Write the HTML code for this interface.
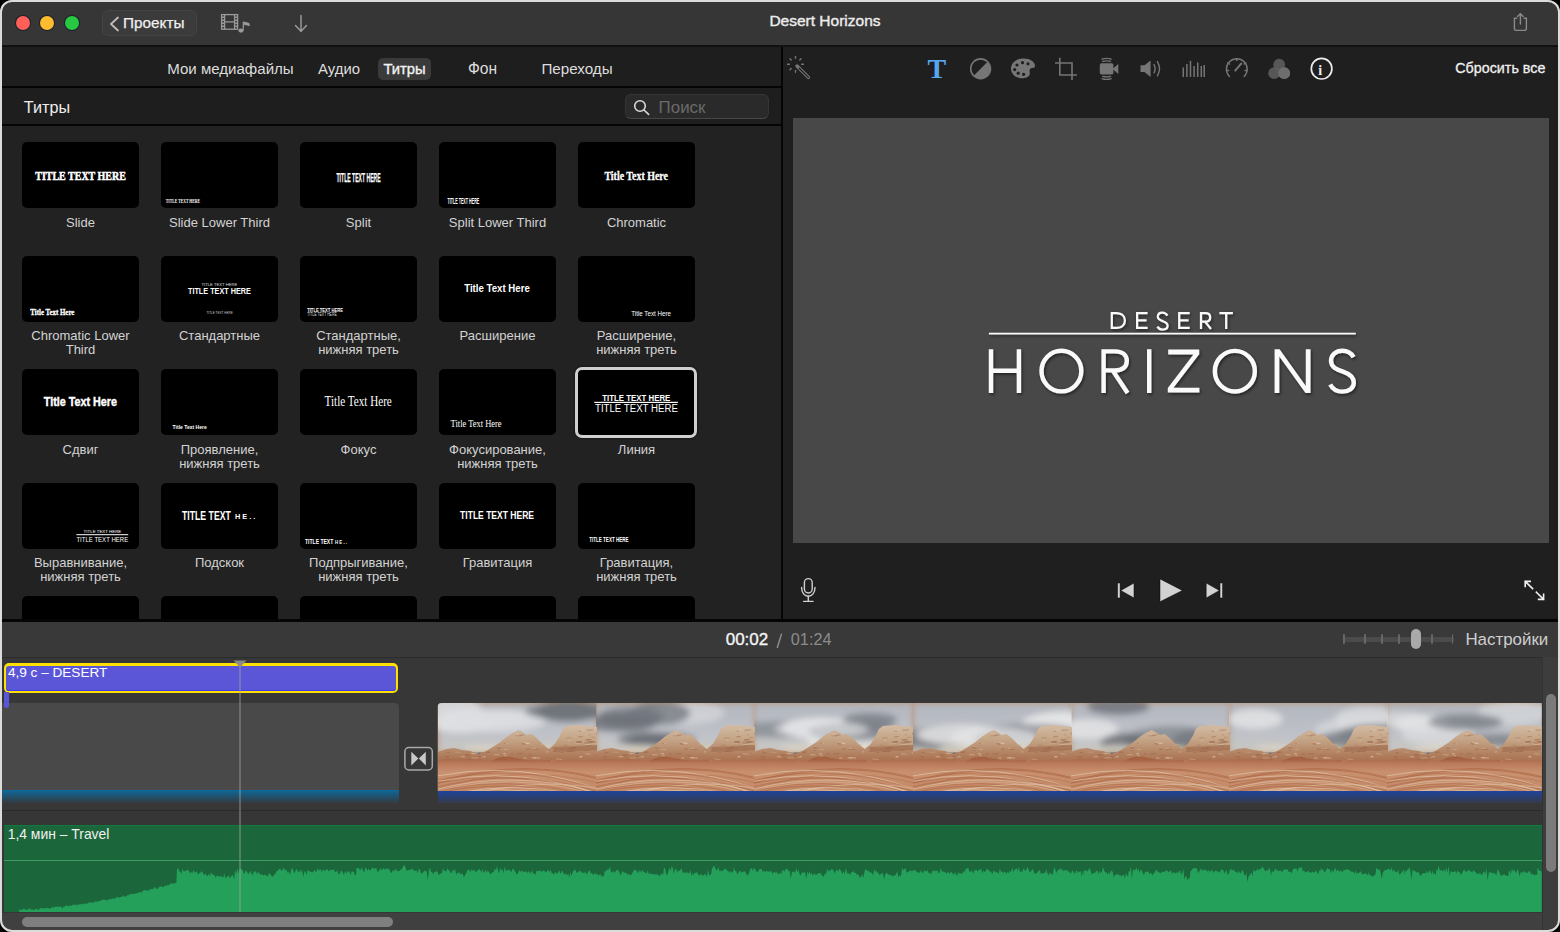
<!DOCTYPE html>
<html><head><meta charset="utf-8">
<style>
*{margin:0;padding:0;box-sizing:border-box}
html,body{width:1560px;height:932px;overflow:hidden;background:#000}
body{font-family:"Liberation Sans",sans-serif;position:relative}
#win{position:absolute;left:0;top:0;width:1560px;height:932px;border-radius:12px;overflow:hidden;background:#1f1f1f}
.t{position:absolute;line-height:1;white-space:nowrap}
.r{position:absolute}
svg{position:absolute;overflow:visible}
#frame{position:absolute;left:0;top:0;width:1560px;height:932px;border-radius:12px;border:2px solid #dcdcdc;pointer-events:none}
</style></head><body>
<div id="win">

<div class="r" style="left:0px;top:0px;width:1560px;height:46px;background:#363636;"></div>
<div class="r" style="left:0px;top:45.4px;width:1560px;height:1.9px;background:#111111;"></div>
<div class="r" style="left:16.2px;top:16.2px;width:14px;height:14px;border-radius:50%;background:#fe5f57;box-shadow:0 0 0 1px #1c2130"></div>
<div class="r" style="left:40.4px;top:16.2px;width:14px;height:14px;border-radius:50%;background:#febc2e;box-shadow:0 0 0 1px #1c2130"></div>
<div class="r" style="left:64.6px;top:16.2px;width:14px;height:14px;border-radius:50%;background:#28c840;box-shadow:0 0 0 1px #1c2130"></div>
<div class="r" style="left:102px;top:10px;width:95px;height:26px;border-radius:6px;background:#3b3b3b;border:1px solid #444"></div>
<svg style="left:0;top:0" width="1560" height="46"><polyline points="118,17.5 111,24 118,30.5" fill="none" stroke="#bdbdbd" stroke-width="1.8" stroke-linecap="round" stroke-linejoin="round"/></svg>
<svg style="left:0;top:0" width="1" height="1"><text x="123.00" y="28.20" font-family="'Liberation Sans'" font-size="15.3" font-weight="normal" fill="#f0f0f0" stroke="#f0f0f0" stroke-width="0.25">Проекты</text></svg>
<svg style="left:0;top:0" width="1560" height="46">
<g fill="none" stroke="#9a9a9a" stroke-width="1.3">
<rect x="221.6" y="14.6" width="16" height="14.6"/>
<line x1="224.6" y1="14.6" x2="224.6" y2="29.2"/><line x1="234.6" y1="14.6" x2="234.6" y2="29.2"/>
<line x1="224.6" y1="21.9" x2="234.6" y2="21.9"/>
</g>
<g fill="#9a9a9a"><rect x="221.8" y="16.5" width="2.2" height="1.5"/><rect x="221.8" y="19.5" width="2.2" height="1.5"/><rect x="221.8" y="22.5" width="2.2" height="1.5"/><rect x="221.8" y="25.5" width="2.2" height="1.5"/>
<rect x="235.2" y="16.5" width="2.2" height="1.5"/><rect x="235.2" y="19.5" width="2.2" height="1.5"/><rect x="235.2" y="22.5" width="2.2" height="1.5"/><rect x="235.2" y="25.5" width="2.2" height="1.5"/>
<ellipse cx="241" cy="30.6" rx="2.6" ry="2.1"/></g>
<path d="M243.2 30.4 V22 Q246 22.3 249.2 23.6 L249.2 25.6 Q246.5 24.6 244.4 24.4" fill="#9a9a9a" stroke="#9a9a9a" stroke-width="1"/>
<g fill="none" stroke="#a0a0a0" stroke-width="1.4" stroke-linecap="round"><line x1="301" y1="15.5" x2="301" y2="31"/><polyline points="295.5,25.5 301,31.2 306.5,25.5"/></g>
<g fill="none" stroke="#8a8a8a" stroke-width="1.4" stroke-linecap="round" stroke-linejoin="round">
<path d="M1516.6 18.3 H1514.4 V28.6 Q1514.4 30.4 1516.2 30.4 H1524.6 Q1526.4 30.4 1526.4 28.6 V18.3 H1524.2"/>
<line x1="1520.4" y1="13.8" x2="1520.4" y2="24"/><polyline points="1517.6,16.6 1520.4,13.8 1523.2,16.6"/></g>
</svg>
<svg style="left:0;top:0" width="1" height="1"><text x="769.40" y="26.30" font-family="'Liberation Sans'" font-size="15.5" font-weight="normal" fill="#ececec" stroke="#ececec" stroke-width="0.4">Desert Horizons</text></svg>
<div class="r" style="left:0px;top:47px;width:781px;height:39px;background:#1e1e1e;"></div>
<div class="r" style="left:0px;top:86px;width:781px;height:2px;background:#050505;"></div>
<div class="r" style="left:0px;top:88px;width:781px;height:36px;background:#1e1e1e;"></div>
<div class="r" style="left:0px;top:124px;width:781px;height:2px;background:#050505;"></div>
<div class="r" style="left:0px;top:126px;width:781px;height:493px;background:#222222;"></div>
<div class="r" style="left:378px;top:57.7px;width:53px;height:22px;border-radius:5px;background:#3a3a3a"></div>
<svg style="left:0;top:0" width="1" height="1"><text x="167.20" y="74.20" font-family="'Liberation Sans'" font-size="15.07" font-weight="normal" fill="#dddddd">Мои медиафайлы</text></svg>
<svg style="left:0;top:0" width="1" height="1"><text x="318.00" y="74.20" font-family="'Liberation Sans'" font-size="14.9" font-weight="normal" fill="#dddddd">Аудио</text></svg>
<svg style="left:0;top:0" width="1" height="1"><text x="383.50" y="74.20" font-family="'Liberation Sans'" font-size="14.76" font-weight="normal" fill="#f2f2f2" stroke="#f2f2f2" stroke-width="0.35">Титры</text></svg>
<svg style="left:0;top:0" width="1" height="1"><text x="467.90" y="74.20" font-family="'Liberation Sans'" font-size="15.6" font-weight="normal" fill="#dddddd">Фон</text></svg>
<svg style="left:0;top:0" width="1" height="1"><text x="541.40" y="74.20" font-family="'Liberation Sans'" font-size="15.2" font-weight="normal" fill="#dddddd">Переходы</text></svg>
<svg style="left:0;top:0" width="1" height="1"><text x="23.80" y="113.40" font-family="'Liberation Sans'" font-size="16.2" font-weight="normal" fill="#eeeeee">Титры</text></svg>
<div class="r" style="left:625.3px;top:94.2px;width:144px;height:24.4px;border-radius:6px;background:#2a2a2a;border:1px solid #353535;border-bottom-color:#474747"></div>
<svg style="left:0;top:0" width="781" height="130"><g fill="none" stroke="#d8d8d8" stroke-width="1.6" stroke-linecap="round"><circle cx="640" cy="106" r="5.3"/><line x1="644" y1="110" x2="648.6" y2="114.4"/></g></svg>
<svg style="left:0;top:0" width="1" height="1"><text x="658.60" y="112.80" font-family="'Liberation Sans'" font-size="16.9" font-weight="normal" fill="#6a6a6a">Поиск</text></svg>
<div class="r" style="left:781px;top:47px;width:2px;height:574px;background:#050505;"></div>
<div class="r" style="left:783px;top:47px;width:777px;height:572px;background:#1f1f1f;"></div>
<div class="r" style="left:793px;top:117.5px;width:756px;height:425.5px;background:#484848;"></div>
<div class="r" style="left:22px;top:142.2px;width:117px;height:66.0px;border-radius:5px;background:#000"></div>
<div class="r" style="left:161px;top:142.2px;width:117px;height:66.0px;border-radius:5px;background:#000"></div>
<div class="r" style="left:300px;top:142.2px;width:117px;height:66.0px;border-radius:5px;background:#000"></div>
<div class="r" style="left:439px;top:142.2px;width:117px;height:66.0px;border-radius:5px;background:#000"></div>
<div class="r" style="left:578px;top:142.2px;width:117px;height:66.0px;border-radius:5px;background:#000"></div>
<div class="r" style="left:22px;top:255.6px;width:117px;height:66.0px;border-radius:5px;background:#000"></div>
<div class="r" style="left:161px;top:255.6px;width:117px;height:66.0px;border-radius:5px;background:#000"></div>
<div class="r" style="left:300px;top:255.6px;width:117px;height:66.0px;border-radius:5px;background:#000"></div>
<div class="r" style="left:439px;top:255.6px;width:117px;height:66.0px;border-radius:5px;background:#000"></div>
<div class="r" style="left:578px;top:255.6px;width:117px;height:66.0px;border-radius:5px;background:#000"></div>
<div class="r" style="left:22px;top:369.1px;width:117px;height:66.0px;border-radius:5px;background:#000"></div>
<div class="r" style="left:161px;top:369.1px;width:117px;height:66.0px;border-radius:5px;background:#000"></div>
<div class="r" style="left:300px;top:369.1px;width:117px;height:66.0px;border-radius:5px;background:#000"></div>
<div class="r" style="left:439px;top:369.1px;width:117px;height:66.0px;border-radius:5px;background:#000"></div>
<div class="r" style="left:578px;top:369.1px;width:117px;height:66.0px;border-radius:5px;background:#000"></div>
<div class="r" style="left:22px;top:482.8px;width:117px;height:66.0px;border-radius:5px;background:#000"></div>
<div class="r" style="left:161px;top:482.8px;width:117px;height:66.0px;border-radius:5px;background:#000"></div>
<div class="r" style="left:300px;top:482.8px;width:117px;height:66.0px;border-radius:5px;background:#000"></div>
<div class="r" style="left:439px;top:482.8px;width:117px;height:66.0px;border-radius:5px;background:#000"></div>
<div class="r" style="left:578px;top:482.8px;width:117px;height:66.0px;border-radius:5px;background:#000"></div>
<div class="r" style="left:22px;top:596.2px;width:117px;height:22.8px;border-radius:5px 5px 0 0;background:#000"></div>
<div class="r" style="left:161px;top:596.2px;width:117px;height:22.8px;border-radius:5px 5px 0 0;background:#000"></div>
<div class="r" style="left:300px;top:596.2px;width:117px;height:22.8px;border-radius:5px 5px 0 0;background:#000"></div>
<div class="r" style="left:439px;top:596.2px;width:117px;height:22.8px;border-radius:5px 5px 0 0;background:#000"></div>
<div class="r" style="left:578px;top:596.2px;width:117px;height:22.8px;border-radius:5px 5px 0 0;background:#000"></div>
<div class="r" style="left:575.3px;top:366.7px;width:121.6px;height:71px;border-radius:7px;border:3px solid #cfcfcf;box-shadow:0 0 2px #000"></div>
<svg style="left:0;top:0" width="781" height="619"><text x="35.3" y="179.7" font-family='"Liberation Serif"' font-weight="bold" font-size="12.21" textLength="90.5" lengthAdjust="spacingAndGlyphs" fill="#fff" stroke="#fff" stroke-width="0.5">TITLE TEXT HERE</text><text x="165.8" y="203" font-family='"Liberation Serif"' font-weight="bold" font-size="5.34" textLength="34.2" lengthAdjust="spacingAndGlyphs" fill="#fff">TITLE TEXT HERE</text><text x="336.5" y="181.5" font-family='"Liberation Sans"' font-weight="bold" font-size="12.35" textLength="44.2" lengthAdjust="spacingAndGlyphs" fill="#fff" stroke="#fff" stroke-width="0.25">TITLE TEXT HERE</text><text x="447.4" y="203.6" font-family='"Liberation Sans"' font-weight="bold" font-size="8.72" textLength="31.9" lengthAdjust="spacingAndGlyphs" fill="#fff">TITLE TEXT HERE</text><text x="604.4" y="180.2" font-family='"Liberation Serif"' font-weight="bold" font-size="11.76" textLength="63.6" lengthAdjust="spacingAndGlyphs" fill="#fff" stroke="#fff" stroke-width="0.3">Title Text Here</text><text x="30.3" y="315" font-family='"Liberation Serif"' font-weight="bold" font-size="8.40" textLength="44.1" lengthAdjust="spacingAndGlyphs" fill="#fff" stroke="#fff" stroke-width="0.3">Title Text Here</text><text x="201.5" y="285.6" font-family='"Liberation Sans"' font-weight="normal" font-size="3.78" textLength="35.9" lengthAdjust="spacingAndGlyphs" fill="#ddd">TITLE TEXT HERE</text><text x="188" y="294" font-family='"Liberation Sans"' font-weight="bold" font-size="9.30" textLength="62.8" lengthAdjust="spacingAndGlyphs" fill="#fff">TITLE TEXT HERE</text><text x="206.4" y="313.8" font-family='"Liberation Sans"' font-weight="normal" font-size="3.78" textLength="26.4" lengthAdjust="spacingAndGlyphs" fill="#ccc">TITLE TEXT HERE</text><text x="307.2" y="312" font-family='"Liberation Sans"' font-weight="bold" font-size="5.81" textLength="35.8" lengthAdjust="spacingAndGlyphs" fill="#fff">TITLE TEXT HERE</text><text x="307.2" y="315.8" font-family='"Liberation Sans"' font-weight="normal" font-size="4.51" textLength="29.5" lengthAdjust="spacingAndGlyphs" fill="#ddd">TITLE TEXT HERE</text><text x="464.2" y="292" font-family='"Liberation Sans"' font-weight="bold" font-size="11.05" textLength="65.6" lengthAdjust="spacingAndGlyphs" fill="#fff">Title Text Here</text><text x="631.2" y="315.5" font-family='"Liberation Sans"' font-weight="normal" font-size="6.83" textLength="39.9" lengthAdjust="spacingAndGlyphs" fill="#fff">Title Text Here</text><text x="43.8" y="406.3" font-family='"Liberation Sans"' font-weight="bold" font-size="13.08" textLength="73.1" lengthAdjust="spacingAndGlyphs" fill="#fff" stroke="#fff" stroke-width="0.45">Title Text Here</text><text x="172.6" y="428.8" font-family='"Liberation Sans"' font-weight="bold" font-size="6.25" textLength="34.1" lengthAdjust="spacingAndGlyphs" fill="#fff">Title Text Here</text><text x="324.6" y="405.7" font-family='"Liberation Serif"' font-weight="normal" font-size="13.59" textLength="67.2" lengthAdjust="spacingAndGlyphs" fill="#fff">Title Text Here</text><text x="450.6" y="426.7" font-family='"Liberation Serif"' font-weight="normal" font-size="9.62" textLength="51.0" lengthAdjust="spacingAndGlyphs" fill="#fff">Title Text Here</text><text x="602.3" y="400.7" font-family='"Liberation Sans"' font-weight="bold" font-size="8.28" textLength="68.0" lengthAdjust="spacingAndGlyphs" fill="#fff">TITLE TEXT HERE</text><rect x="594.3" y="401.8" width="83.6" height="1.2" fill="#fff"/><text x="595" y="411.9" font-family='"Liberation Sans"' font-weight="normal" font-size="10.61" textLength="82.9" lengthAdjust="spacingAndGlyphs" fill="#fff">TITLE TEXT HERE</text><text x="83.6" y="533.3" font-family='"Liberation Sans"' font-weight="normal" font-size="4.07" textLength="37.7" lengthAdjust="spacingAndGlyphs" fill="#fff">TITLE TEXT HERE</text><rect x="76.4" y="534.2" width="51.8" height="1" fill="#fff"/><text x="76.4" y="542" font-family='"Liberation Sans"' font-weight="normal" font-size="7.27" textLength="51.8" lengthAdjust="spacingAndGlyphs" fill="#fff">TITLE TEXT HERE</text><text x="182" y="519.7" font-family='"Liberation Sans"' font-weight="bold" font-size="12.21" textLength="48.8" lengthAdjust="spacingAndGlyphs" fill="#fff">TITLE TEXT</text><text x="234.9" y="519.2" font-family='"Liberation Sans"' font-weight="bold" font-size="7.27" textLength="20.5" lengthAdjust="spacingAndGlyphs" fill="#fff">H E . .</text><text x="305" y="543.6" font-family='"Liberation Sans"' font-weight="bold" font-size="7.41" textLength="28.3" lengthAdjust="spacingAndGlyphs" fill="#fff">TITLE TEXT</text><text x="335" y="543.6" font-family='"Liberation Sans"' font-weight="bold" font-size="5.23" textLength="12.0" lengthAdjust="spacingAndGlyphs" fill="#fff">H E . .</text><text x="460.1" y="518.7" font-family='"Liberation Sans"' font-weight="bold" font-size="10.61" textLength="73.9" lengthAdjust="spacingAndGlyphs" fill="#fff">TITLE TEXT HERE</text><text x="589.2" y="542" font-family='"Liberation Sans"' font-weight="bold" font-size="6.69" textLength="39.4" lengthAdjust="spacingAndGlyphs" fill="#fff">TITLE TEXT HERE</text></svg>
<div class="t" style="left:10.5px;width:140px;text-align:center;top:216.00px;font-size:13px;line-height:14px;color:#d2d2d2;white-space:normal">Slide</div>
<div class="t" style="left:149.5px;width:140px;text-align:center;top:216.00px;font-size:13px;line-height:14px;color:#d2d2d2;white-space:normal">Slide Lower Third</div>
<div class="t" style="left:288.5px;width:140px;text-align:center;top:216.00px;font-size:13px;line-height:14px;color:#d2d2d2;white-space:normal">Split</div>
<div class="t" style="left:427.5px;width:140px;text-align:center;top:216.00px;font-size:13px;line-height:14px;color:#d2d2d2;white-space:normal">Split Lower Third</div>
<div class="t" style="left:566.5px;width:140px;text-align:center;top:216.00px;font-size:13px;line-height:14px;color:#d2d2d2;white-space:normal">Chromatic</div>
<div class="t" style="left:10.5px;width:140px;text-align:center;top:329.00px;font-size:13px;line-height:14px;color:#d2d2d2;white-space:normal">Chromatic Lower<br>Third</div>
<div class="t" style="left:149.5px;width:140px;text-align:center;top:329.00px;font-size:13px;line-height:14px;color:#d2d2d2;white-space:normal">Стандартные</div>
<div class="t" style="left:288.5px;width:140px;text-align:center;top:329.00px;font-size:13px;line-height:14px;color:#d2d2d2;white-space:normal">Стандартные,<br>нижняя треть</div>
<div class="t" style="left:427.5px;width:140px;text-align:center;top:329.00px;font-size:13px;line-height:14px;color:#d2d2d2;white-space:normal">Расширение</div>
<div class="t" style="left:566.5px;width:140px;text-align:center;top:329.00px;font-size:13px;line-height:14px;color:#d2d2d2;white-space:normal">Расширение,<br>нижняя треть</div>
<div class="t" style="left:10.5px;width:140px;text-align:center;top:443.00px;font-size:13px;line-height:14px;color:#d2d2d2;white-space:normal">Сдвиг</div>
<div class="t" style="left:149.5px;width:140px;text-align:center;top:443.00px;font-size:13px;line-height:14px;color:#d2d2d2;white-space:normal">Проявление,<br>нижняя треть</div>
<div class="t" style="left:288.5px;width:140px;text-align:center;top:443.00px;font-size:13px;line-height:14px;color:#d2d2d2;white-space:normal">Фокус</div>
<div class="t" style="left:427.5px;width:140px;text-align:center;top:443.00px;font-size:13px;line-height:14px;color:#d2d2d2;white-space:normal">Фокусирование,<br>нижняя треть</div>
<div class="t" style="left:566.5px;width:140px;text-align:center;top:443.00px;font-size:13px;line-height:14px;color:#d2d2d2;white-space:normal">Линия</div>
<div class="t" style="left:10.5px;width:140px;text-align:center;top:556.00px;font-size:13px;line-height:14px;color:#d2d2d2;white-space:normal">Выравнивание,<br>нижняя треть</div>
<div class="t" style="left:149.5px;width:140px;text-align:center;top:556.00px;font-size:13px;line-height:14px;color:#d2d2d2;white-space:normal">Подскок</div>
<div class="t" style="left:288.5px;width:140px;text-align:center;top:556.00px;font-size:13px;line-height:14px;color:#d2d2d2;white-space:normal">Подпрыгивание,<br>нижняя треть</div>
<div class="t" style="left:427.5px;width:140px;text-align:center;top:556.00px;font-size:13px;line-height:14px;color:#d2d2d2;white-space:normal">Гравитация</div>
<div class="t" style="left:566.5px;width:140px;text-align:center;top:556.00px;font-size:13px;line-height:14px;color:#d2d2d2;white-space:normal">Гравитация,<br>нижняя треть</div>
<svg style="left:0;top:0" width="1560" height="619">
<g stroke="#767676" stroke-linecap="round" fill="none">
 <line x1="797" y1="66" x2="808.4" y2="77.4" stroke-width="3.4"/>
 <line x1="799.2" y1="68.2" x2="808.4" y2="77.4" stroke-width="1.3" stroke="#1f1f1f"/>
 <g stroke-width="1.4">
 <line x1="795.5" y1="56.4" x2="795.5" y2="58.2"/>
 <line x1="795.5" y1="70.4" x2="795.5" y2="72.2"/>
 <line x1="787.6" y1="64.2" x2="789.4" y2="64.2"/>
 <line x1="801.6" y1="64.2" x2="803.4" y2="64.2"/>
 <line x1="790" y1="58.7" x2="791.2" y2="59.9"/>
 <line x1="801" y1="58.7" x2="799.8" y2="59.9"/>
 <line x1="790" y1="69.7" x2="791.2" y2="68.5"/>
 </g>
</g>
<text x="927.6" y="78.4" font-family="'Liberation Serif'" font-weight="bold" font-size="28" fill="#56a6ee">T</text>
<circle cx="980.6" cy="68.8" r="9.9" fill="none" stroke="#767676" stroke-width="1.6"/>
<path d="M987.6 61.8 A9.9 9.9 0 0 1 973.6 75.8 Z" fill="#767676"/>
<path d="M1023 58.6 C1030 58.4 1035.2 62 1035 66.2 C1034.8 68.4 1032 67.6 1030.6 68.4 C1028.6 69.6 1030.4 72.6 1029.6 74.8 C1028.6 77.6 1024 78.6 1020.4 78.2 C1014.6 77.6 1011 73.4 1011 68.6 C1011 63 1016 58.8 1023 58.6 Z" fill="#767676"/>
<g fill="#1f1f1f"><circle cx="1017" cy="65" r="1.6"/><circle cx="1022.5" cy="62.7" r="1.6"/><circle cx="1028" cy="63.8" r="1.6"/><circle cx="1014.7" cy="69.6" r="1.6"/><circle cx="1018.2" cy="73.2" r="1.6"/><circle cx="1023.6" cy="74.3" r="1.6"/></g>
<g stroke="#767676" stroke-width="1.6" fill="none" stroke-linecap="butt">
<polyline points="1059.8,57.7 1059.8,75 1077,75"/>
<polyline points="1055,63 1072,63 1072,80"/>
</g>
<rect x="1099.8" y="63.2" width="13.6" height="11.4" rx="1.8" fill="#767676"/>
<path d="M1112.5 69 L1118.3 64 L1118.3 74 Z" fill="#767676"/>
<g fill="none" stroke="#767676" stroke-width="1.3" stroke-linecap="round">
<path d="M1102 59.2 Q1106.6 57.6 1111.2 59.2"/><path d="M1102.6 61.4 Q1106.6 60.4 1110.6 61.4"/>
<path d="M1102.6 76.4 Q1106.6 77.4 1110.6 76.4"/><path d="M1102 78.6 Q1106.6 80.2 1111.2 78.6"/>
</g>
<path d="M1140.5 65.3 H1144.5 L1150.6 60.4 V77 L1144.5 72 H1140.5 Z" fill="#767676"/>
<g fill="none" stroke="#767676" stroke-width="1.4" stroke-linecap="round">
<path d="M1154 64.6 Q1156.2 68.7 1154 72.8"/><path d="M1157.4 61.6 Q1161.6 68.7 1157.4 75.8"/>
</g>
<g stroke="#767676" stroke-width="1.5">
<line x1="1183.3" y1="77" x2="1183.3" y2="67.5"/><line x1="1186.9" y1="77" x2="1186.9" y2="64"/><line x1="1190.5" y1="77" x2="1190.5" y2="60.8"/>
<line x1="1194.1" y1="77" x2="1194.1" y2="66"/><line x1="1197.7" y1="77" x2="1197.7" y2="62.5"/><line x1="1201.3" y1="77" x2="1201.3" y2="66"/>
<line x1="1204.2" y1="77" x2="1204.2" y2="65"/>
</g>
<g fill="none" stroke="#767676" stroke-width="1.4" stroke-linecap="round">
<path d="M1229.4 76.4 A10.4 10.4 0 1 1 1244.2 76.4"/>
<line x1="1236.8" y1="58.4" x2="1236.8" y2="60.6"/><line x1="1227.8" y1="62.8" x2="1229.6" y2="64"/><line x1="1245.8" y1="62.8" x2="1244" y2="64"/>
<line x1="1226.5" y1="70.5" x2="1228.6" y2="70.5"/><line x1="1247" y1="70.5" x2="1245" y2="70.5"/>
<line x1="1235.2" y1="70.6" x2="1241.2" y2="63.6" stroke-width="2"/>
</g>
<g fill="#626262" fill-opacity="0.85"><circle cx="1279.2" cy="64.6" r="5.9"/><circle cx="1274.2" cy="73.2" r="5.9"/><circle cx="1284.2" cy="73.2" r="5.9"/></g>
<g fill="#6e6e6e"><circle cx="1284.2" cy="73.2" r="5.9"/></g>
<circle cx="1321.6" cy="68.7" r="10.3" fill="none" stroke="#ececec" stroke-width="1.7"/>
<text x="1318.3" y="74.6" font-family="'Liberation Serif'" font-weight="bold" font-size="14" fill="#ececec">i</text>
</svg>
<svg style="left:0;top:0" width="1" height="1"><text x="1455.30" y="72.80" font-family="'Liberation Sans'" font-size="14.3" font-weight="normal" fill="#f0f0f0" stroke="#f0f0f0" stroke-width="0.3">Сбросить все</text></svg>
<svg style="left:0;top:0" width="1560" height="619">
<defs><filter id="sh" x="-10%" y="-30%" width="120%" height="160%"><feDropShadow dx="1.2" dy="1.6" stdDeviation="1.4" flood-color="#000" flood-opacity="0.55"/></filter></defs>
<g filter="url(#sh)" fill="none" stroke="#fafafa">
<g stroke-width="4.4" stroke-linejoin="miter">
<path d="M991 349.2 V393 M1018.9 349.2 V393 M991 370.7 H1018.9"/>
<ellipse cx="1061.4" cy="371.1" rx="19.9" ry="20.3"/>
<path d="M1103.6 393 V351.4 H1115 C1123.6 351.4 1126.8 356.2 1126.8 361 C1126.8 366 1123.6 370.4 1115 370.4 H1103.6 M1112.6 370.4 L1127.6 393"/>
<path d="M1149.2 349.2 V393"/>
<path d="M1168.2 349.6 H1199.2 V354.2 L1173.5 387.8 H1199.4 V392.6 H1167.8 V388 L1193.4 354.4 H1168.2 Z" fill="#fafafa" stroke="none"/>
<ellipse cx="1234.85" cy="371.2" rx="20" ry="20.3"/>
<path d="M1274.6 393 V349.2 H1279.6 L1305.8 386 V349.2 H1310.5 V393 H1305.5 L1279.3 356.4 V393 Z" fill="#fafafa" stroke="none"/>
<path d="M1353.6 357.2 C1351.2 353 1347.2 350.8 1342.4 350.8 C1335.8 350.8 1331 355 1331 360.8 C1331 367.4 1337 369.6 1343 371.6 C1349.6 373.8 1353.8 376.8 1353.8 382.8 C1353.8 388.2 1348.8 391.6 1342.4 391.6 C1336.6 391.6 1332.4 388.6 1330.2 384.4"/>
</g>
<g stroke-width="2.2">
<path d="M1111.8 329 V313.1 H1116.2 C1122.6 313.1 1124.9 317 1124.9 320.5 C1124.9 324.2 1122.6 327.9 1116.2 327.9 H1111.8"/>
<path d="M1147.6 313.1 H1137.1 V327.9 H1147.6 M1137.1 320.4 H1146.6"/>
<path d="M1167.4 315.6 C1166.2 313.6 1164.4 312.6 1162.4 312.6 C1159.6 312.6 1157.8 314.4 1157.8 316.8 C1157.8 319.6 1160.4 320.4 1162.8 321.2 C1165.6 322.1 1167.6 323.4 1167.6 325.8 C1167.6 328.2 1165.4 329.6 1162.6 329.6 C1160.2 329.6 1158.4 328.4 1157.4 326.6"/>
<path d="M1189.7 313.1 H1179.2 V327.9 H1189.7 M1179.2 320.4 H1188.6"/>
<path d="M1201 329 V313.1 H1205.4 C1208.8 313.1 1210.2 315.2 1210.2 317.4 C1210.2 319.6 1208.8 321.6 1205.4 321.6 H1201 M1205 321.6 L1211 329"/>
<path d="M1219.4 313.1 H1232.9 M1226.2 313.1 V329"/>
</g>
<line x1="988.9" y1="333.6" x2="1355.8" y2="333.6" stroke-width="1.6"/>
</g>
</svg>
<svg style="left:0;top:0" width="1560" height="619">
<g fill="none" stroke="#cfcfcf" stroke-width="1.4" stroke-linecap="round">
<rect x="804.4" y="578.6" width="7.8" height="14.4" rx="3.9"/>
<path d="M801.6 587.4 C801.6 593 804.6 596.2 808.3 596.2 C812 596.2 815 593 815 587.4"/>
<line x1="808.3" y1="596.2" x2="808.3" y2="601.4"/><line x1="803.6" y1="601.4" x2="813" y2="601.4"/>
</g>
<g fill="#d2d2d2" stroke="#000" stroke-width="0.8" stroke-opacity="0.6">
<rect x="1117.5" y="583" width="2.6" height="15"/>
<path d="M1120.8 590.5 L1134 583 V598 Z"/>
<path d="M1160 578.9 L1182.4 590.4 L1160 601.8 Z"/>
<path d="M1219.4 590.5 L1206.2 583 V598 Z"/>
<rect x="1220" y="583" width="2.6" height="15"/>
</g>
<g fill="none" stroke="#f0f0f0" stroke-width="1.6" stroke-linecap="square">
<path d="M1525.2 581.4 L1532.6 588.6 M1525.2 586.4 V581.4 H1530.2"/>
<path d="M1536.4 592.2 L1543.6 599.4 M1543.6 594.4 V599.4 H1538.6"/>
</g>
</svg>
<div class="r" style="left:0px;top:619px;width:1560px;height:2.5px;background:#050505;"></div>
<div class="r" style="left:0px;top:621.5px;width:1560px;height:35.5px;background:#393939;"></div>
<div class="r" style="left:0px;top:657px;width:1560px;height:1px;background:#2c2c2c;"></div>
<div class="r" style="left:0px;top:658px;width:1560px;height:274px;background:#373737;"></div>
<svg style="left:0;top:0" width="1" height="1"><text x="725.70" y="645.40" font-family="'Liberation Sans'" font-size="17" font-weight="normal" fill="#f4f4f4" stroke="#f4f4f4" stroke-width="0.35">00:02</text></svg>
<svg style="left:0;top:0" width="1" height="1"><text x="790.80" y="645.40" font-family="'Liberation Sans'" font-size="16.3" font-weight="normal" fill="#8c8c8c">01:24</text></svg>
<svg style="left:0;top:0" width="1560" height="932"><line x1="781.6" y1="633.6" x2="777.2" y2="648" stroke="#8c8c8c" stroke-width="1.5"/></svg>
<div class="r" style="left:1343px;top:636.8px;width:111px;height:4.8px;background:#4b4b4b;border-radius:1px"></div>
<div class="r" style="left:1343.4px;top:634px;width:1.6px;height:9.6px;background:#676767;border-radius:1px"></div>
<div class="r" style="left:1364.1px;top:634px;width:1.6px;height:9.6px;background:#676767;border-radius:1px"></div>
<div class="r" style="left:1381.0px;top:634px;width:1.6px;height:9.6px;background:#676767;border-radius:1px"></div>
<div class="r" style="left:1398.1px;top:634px;width:1.6px;height:9.6px;background:#676767;border-radius:1px"></div>
<div class="r" style="left:1431.2px;top:634px;width:1.6px;height:9.6px;background:#676767;border-radius:1px"></div>
<div class="r" style="left:1451.8px;top:634px;width:1.6px;height:9.6px;background:#676767;border-radius:1px"></div>
<div class="r" style="left:1410.5px;top:629px;width:10.3px;height:20px;background:#a9a9a9;border-radius:5.2px"></div>
<svg style="left:0;top:0" width="1" height="1"><text x="1465.40" y="645.00" font-family="'Liberation Sans'" font-size="16.9" font-weight="normal" fill="#cfcfcf">Настройки</text></svg>
<div class="r" style="left:1541.7px;top:657px;width:16.3px;height:275px;background:#3d3d3d;"></div>
<div class="r" style="left:1541.7px;top:657px;width:1px;height:275px;background:#333;"></div>
<div class="r" style="left:1546.4px;top:693.8px;width:9.8px;height:178px;background:#7b7b7b;border-radius:5px"></div>
<div class="r" style="left:3.8px;top:663px;width:394.6px;height:30px;border-radius:5px;background:#ffe000"></div>
<div class="r" style="left:6.3px;top:665.5px;width:389.6px;height:25px;border-radius:3px;background:#5b56d7;box-shadow:inset 0 -1px 0 #3f3aea"></div>
<svg style="left:0;top:0" width="1" height="1"><text x="7.90" y="677.00" font-family="'Liberation Sans'" font-size="13.6" font-weight="normal" fill="#ffffff">4,9 с – DESERT</text></svg>
<div class="r" style="left:2px;top:702.5px;width:396.5px;height:100.5px;border-radius:0 4px 0 0;background:#494949"></div>
<div class="r" style="left:2px;top:790.2px;width:396.5px;height:12.8px;background:linear-gradient(#0d6a9c,#1b5677 40%,#353a40)"></div>
<div class="r" style="left:3.8px;top:692px;width:5px;height:15.5px;border-radius:0 0 2.5px 2.5px;background:#5b56d7"></div>
<svg style="left:0;top:0" width="1560" height="932">
<rect x="404.9" y="747.5" width="27.4" height="22.4" rx="4" fill="#363636" stroke="#a9a9a9" stroke-width="1.5"/>
<path d="M411.3 751.8 L418.4 758.6 L411.3 765.4 Z M425.8 751.8 L418.8 758.6 L425.8 765.4 Z" fill="#c8c8c8"/>
</svg>
<svg style="left:0;top:0" width="1560" height="932">
<defs>
<symbol id="fr" viewBox="0 0 158 88" preserveAspectRatio="none">
<defs>
<linearGradient id="gnd" x1="0" y1="0" x2="0" y2="1"><stop offset="0" stop-color="#b06a4a" stop-opacity="0"/><stop offset="0.12" stop-color="#b8785a"/><stop offset="0.4" stop-color="#c8906e"/><stop offset="1" stop-color="#c48a68"/></linearGradient>
<linearGradient id="rk" x1="0" y1="0" x2="0" y2="1"><stop offset="0" stop-color="#d2bca4"/><stop offset="0.35" stop-color="#c4a486"/><stop offset="0.75" stop-color="#ae7a5a"/><stop offset="1" stop-color="#a86a4a"/></linearGradient>
<clipPath id="gc"><rect x="0" y="60" width="158" height="28"/></clipPath>
<filter id="bl2"><feGaussianBlur stdDeviation="0.35"/></filter>
<filter id="bl3" x="-10%" y="-10%" width="120%" height="120%"><feGaussianBlur stdDeviation="0.45"/></filter>
</defs>
<rect x="28" y="49.5" width="20" height="2.4" fill="#5e6268" filter="url(#bl3)"/>
<path d="M0 49 L8 46 L16 45 L24 47 L32 48 L40 51 L48 48 L56 43 L62 39 L68 34 L74 30 L80 27 L84 29 L88 32 L93 31 L98 35 L104 41 L110 46 L116 41 L121 33 L124 26 L128 23 L140 22 L150 23 L158 24 L158 64 L0 64 Z" fill="url(#rk)"/>
<g filter="url(#bl3)"><line x1="58.5" y1="47.3" x2="63.4" y2="47.5" stroke="#d0b090" stroke-width="1.33" opacity="0.51"/><line x1="113.3" y1="45.0" x2="117.7" y2="45.2" stroke="#8a5a40" stroke-width="0.72" opacity="0.57"/><line x1="137.2" y1="44.4" x2="139.2" y2="44.7" stroke="#d0b090" stroke-width="0.73" opacity="0.69"/><line x1="6.8" y1="53.9" x2="11.1" y2="54.1" stroke="#9a6446" stroke-width="1.30" opacity="0.60"/><line x1="145.5" y1="39.6" x2="149.8" y2="40.1" stroke="#8a5a40" stroke-width="1.30" opacity="0.38"/><line x1="152.5" y1="41.1" x2="158.8" y2="41.0" stroke="#d0b090" stroke-width="1.27" opacity="0.55"/><line x1="84.4" y1="40.1" x2="90.9" y2="40.3" stroke="#e2ceb6" stroke-width="1.34" opacity="0.65"/><line x1="156.6" y1="49.8" x2="162.1" y2="49.6" stroke="#e2ceb6" stroke-width="1.03" opacity="0.55"/><line x1="16.4" y1="49.3" x2="22.6" y2="49.3" stroke="#d0b090" stroke-width="0.83" opacity="0.37"/><line x1="134.9" y1="61.6" x2="138.6" y2="61.1" stroke="#dcc4aa" stroke-width="1.32" opacity="0.36"/><line x1="67.5" y1="40.4" x2="69.7" y2="40.5" stroke="#dcc4aa" stroke-width="0.64" opacity="0.60"/><line x1="52.3" y1="57.6" x2="56.8" y2="58.2" stroke="#9a6446" stroke-width="0.85" opacity="0.38"/><line x1="6.7" y1="57.1" x2="10.5" y2="56.7" stroke="#9a6446" stroke-width="1.29" opacity="0.48"/><line x1="137.4" y1="39.3" x2="142.8" y2="38.8" stroke="#8a5a40" stroke-width="1.38" opacity="0.63"/><line x1="113.1" y1="59.6" x2="120.0" y2="59.7" stroke="#a85e3e" stroke-width="1.04" opacity="0.35"/><line x1="65.6" y1="46.5" x2="69.5" y2="46.6" stroke="#dcc4aa" stroke-width="0.71" opacity="0.57"/><line x1="144.9" y1="47.5" x2="150.6" y2="47.0" stroke="#9a6446" stroke-width="0.65" opacity="0.59"/><line x1="152.2" y1="34.3" x2="155.7" y2="34.4" stroke="#a85e3e" stroke-width="0.74" opacity="0.41"/><line x1="119.8" y1="56.2" x2="123.3" y2="56.1" stroke="#9a6446" stroke-width="1.22" opacity="0.36"/><line x1="89.9" y1="52.2" x2="94.4" y2="52.4" stroke="#9a6446" stroke-width="0.82" opacity="0.46"/><line x1="107.1" y1="49.0" x2="109.6" y2="48.8" stroke="#dcc4aa" stroke-width="0.87" opacity="0.64"/><line x1="69.3" y1="56.7" x2="71.7" y2="56.9" stroke="#e2ceb6" stroke-width="0.77" opacity="0.55"/><line x1="42.8" y1="54.1" x2="47.4" y2="53.7" stroke="#dcc4aa" stroke-width="1.25" opacity="0.64"/><line x1="127.5" y1="48.8" x2="131.3" y2="48.3" stroke="#8a5a40" stroke-width="0.83" opacity="0.63"/><line x1="65.9" y1="40.5" x2="68.0" y2="40.4" stroke="#a85e3e" stroke-width="0.76" opacity="0.52"/><line x1="131.5" y1="48.0" x2="135.7" y2="48.6" stroke="#8a5a40" stroke-width="1.34" opacity="0.43"/><line x1="117.8" y1="56.0" x2="123.5" y2="56.5" stroke="#d0b090" stroke-width="1.04" opacity="0.66"/><line x1="136.1" y1="56.7" x2="138.7" y2="56.4" stroke="#9a6446" stroke-width="0.63" opacity="0.63"/><line x1="80.9" y1="32.3" x2="85.8" y2="31.8" stroke="#a85e3e" stroke-width="1.20" opacity="0.41"/><line x1="47.4" y1="49.5" x2="52.1" y2="49.0" stroke="#8a5a40" stroke-width="1.33" opacity="0.39"/><line x1="19.8" y1="61.0" x2="24.2" y2="61.3" stroke="#8a5a40" stroke-width="0.88" opacity="0.42"/><line x1="84.5" y1="55.2" x2="87.7" y2="55.0" stroke="#e2ceb6" stroke-width="1.31" opacity="0.39"/><line x1="145.5" y1="43.0" x2="151.8" y2="42.5" stroke="#8a5a40" stroke-width="0.82" opacity="0.44"/><line x1="83.3" y1="40.7" x2="86.9" y2="41.0" stroke="#a85e3e" stroke-width="1.29" opacity="0.62"/><line x1="77.4" y1="30.8" x2="81.2" y2="31.0" stroke="#dcc4aa" stroke-width="1.07" opacity="0.48"/><line x1="59.0" y1="47.4" x2="62.9" y2="47.7" stroke="#8a5a40" stroke-width="1.10" opacity="0.50"/><line x1="58.8" y1="43.4" x2="62.4" y2="43.9" stroke="#d0b090" stroke-width="0.93" opacity="0.36"/><line x1="93.2" y1="54.7" x2="97.3" y2="55.2" stroke="#e2ceb6" stroke-width="1.35" opacity="0.48"/><line x1="141.9" y1="54.3" x2="144.5" y2="54.5" stroke="#9a6446" stroke-width="1.35" opacity="0.61"/><line x1="134.3" y1="44.6" x2="139.6" y2="44.9" stroke="#a85e3e" stroke-width="1.05" opacity="0.39"/><line x1="22.7" y1="53.6" x2="27.3" y2="53.7" stroke="#dcc4aa" stroke-width="1.13" opacity="0.48"/><line x1="129.5" y1="37.6" x2="131.6" y2="37.2" stroke="#dcc4aa" stroke-width="0.99" opacity="0.59"/><line x1="14.0" y1="61.9" x2="18.6" y2="62.1" stroke="#8a5a40" stroke-width="0.69" opacity="0.61"/><line x1="147.7" y1="27.3" x2="154.0" y2="26.9" stroke="#9a6446" stroke-width="0.66" opacity="0.70"/><line x1="102.1" y1="41.8" x2="107.8" y2="41.7" stroke="#d0b090" stroke-width="0.89" opacity="0.49"/><line x1="153.7" y1="40.3" x2="160.6" y2="40.2" stroke="#d0b090" stroke-width="1.05" opacity="0.55"/><line x1="146.0" y1="50.4" x2="151.2" y2="50.8" stroke="#e2ceb6" stroke-width="0.72" opacity="0.38"/><line x1="118.2" y1="58.9" x2="125.0" y2="59.0" stroke="#8a5a40" stroke-width="1.29" opacity="0.40"/><line x1="81.5" y1="59.6" x2="86.2" y2="59.9" stroke="#d0b090" stroke-width="1.14" opacity="0.65"/><line x1="94.0" y1="46.6" x2="100.5" y2="46.4" stroke="#9a6446" stroke-width="0.81" opacity="0.63"/><line x1="136.5" y1="40.5" x2="140.9" y2="40.6" stroke="#d0b090" stroke-width="0.97" opacity="0.64"/><line x1="129.8" y1="45.6" x2="136.8" y2="45.1" stroke="#a85e3e" stroke-width="1.36" opacity="0.62"/><line x1="139.3" y1="26.7" x2="145.8" y2="26.9" stroke="#e2ceb6" stroke-width="1.22" opacity="0.37"/><line x1="140.6" y1="53.7" x2="143.6" y2="54.0" stroke="#e2ceb6" stroke-width="1.29" opacity="0.66"/><line x1="40.3" y1="57.0" x2="43.2" y2="56.5" stroke="#9a6446" stroke-width="1.24" opacity="0.39"/><line x1="41.7" y1="58.8" x2="45.5" y2="58.9" stroke="#dcc4aa" stroke-width="1.14" opacity="0.35"/><line x1="76.8" y1="32.8" x2="82.5" y2="32.8" stroke="#8a5a40" stroke-width="0.70" opacity="0.46"/><line x1="139.6" y1="27.8" x2="142.1" y2="28.3" stroke="#a85e3e" stroke-width="1.33" opacity="0.38"/><line x1="148.7" y1="38.8" x2="154.5" y2="38.6" stroke="#9a6446" stroke-width="1.14" opacity="0.58"/><line x1="127.4" y1="34.8" x2="132.7" y2="34.9" stroke="#9a6446" stroke-width="0.69" opacity="0.52"/><line x1="55.6" y1="51.6" x2="61.3" y2="51.9" stroke="#d0b090" stroke-width="1.12" opacity="0.61"/><line x1="145.4" y1="41.8" x2="152.0" y2="41.4" stroke="#dcc4aa" stroke-width="0.87" opacity="0.60"/><line x1="94.4" y1="45.5" x2="97.3" y2="45.5" stroke="#d0b090" stroke-width="1.23" opacity="0.60"/><line x1="87.5" y1="46.3" x2="91.3" y2="46.0" stroke="#a85e3e" stroke-width="0.91" opacity="0.66"/><line x1="39.1" y1="53.4" x2="45.4" y2="54.0" stroke="#9a6446" stroke-width="0.96" opacity="0.63"/><line x1="157.3" y1="30.6" x2="159.8" y2="30.1" stroke="#8a5a40" stroke-width="1.22" opacity="0.60"/><line x1="65.8" y1="52.5" x2="68.5" y2="52.6" stroke="#d0b090" stroke-width="1.29" opacity="0.63"/><line x1="28.3" y1="57.1" x2="34.2" y2="56.6" stroke="#9a6446" stroke-width="1.24" opacity="0.66"/><line x1="150.0" y1="39.2" x2="156.5" y2="38.9" stroke="#8a5a40" stroke-width="1.00" opacity="0.54"/><line x1="111.7" y1="58.1" x2="116.1" y2="58.3" stroke="#d0b090" stroke-width="1.18" opacity="0.35"/><line x1="121.7" y1="49.5" x2="124.6" y2="49.6" stroke="#a85e3e" stroke-width="0.76" opacity="0.62"/><line x1="33.5" y1="55.1" x2="40.2" y2="54.6" stroke="#d0b090" stroke-width="0.83" opacity="0.58"/><line x1="14.0" y1="59.2" x2="17.8" y2="58.9" stroke="#dcc4aa" stroke-width="0.66" opacity="0.54"/><line x1="146.9" y1="37.0" x2="152.4" y2="36.5" stroke="#9a6446" stroke-width="1.29" opacity="0.56"/><line x1="146.5" y1="51.5" x2="153.4" y2="52.1" stroke="#d0b090" stroke-width="0.76" opacity="0.37"/><line x1="31.6" y1="50.9" x2="36.0" y2="50.4" stroke="#e2ceb6" stroke-width="0.63" opacity="0.38"/><line x1="78.5" y1="50.9" x2="84.8" y2="50.5" stroke="#8a5a40" stroke-width="0.99" opacity="0.36"/><line x1="72.3" y1="50.6" x2="75.2" y2="51.1" stroke="#a85e3e" stroke-width="1.18" opacity="0.48"/><line x1="58.6" y1="44.6" x2="62.6" y2="45.1" stroke="#8a5a40" stroke-width="1.24" opacity="0.44"/><line x1="58.4" y1="56.6" x2="61.4" y2="56.3" stroke="#8a5a40" stroke-width="0.74" opacity="0.49"/><line x1="64.4" y1="51.0" x2="67.6" y2="50.5" stroke="#dcc4aa" stroke-width="0.99" opacity="0.67"/><line x1="139.5" y1="33.9" x2="143.9" y2="33.5" stroke="#a85e3e" stroke-width="1.10" opacity="0.47"/><line x1="124.5" y1="42.2" x2="128.9" y2="42.3" stroke="#9a6446" stroke-width="0.62" opacity="0.47"/><line x1="156.9" y1="36.7" x2="162.3" y2="37.3" stroke="#dcc4aa" stroke-width="1.07" opacity="0.35"/><line x1="8.5" y1="49.2" x2="11.5" y2="49.8" stroke="#9a6446" stroke-width="0.98" opacity="0.63"/><line x1="144.9" y1="59.8" x2="148.9" y2="60.1" stroke="#dcc4aa" stroke-width="1.11" opacity="0.49"/><line x1="149.7" y1="31.8" x2="152.2" y2="31.7" stroke="#a85e3e" stroke-width="0.87" opacity="0.59"/><line x1="146.7" y1="31.5" x2="153.0" y2="31.3" stroke="#d0b090" stroke-width="1.35" opacity="0.48"/><line x1="29.1" y1="54.7" x2="32.2" y2="55.0" stroke="#a85e3e" stroke-width="0.98" opacity="0.44"/><line x1="26.8" y1="51.7" x2="33.4" y2="51.9" stroke="#8a5a40" stroke-width="1.36" opacity="0.36"/><line x1="27.1" y1="52.8" x2="29.6" y2="53.0" stroke="#a85e3e" stroke-width="1.13" opacity="0.46"/><line x1="94.9" y1="54.6" x2="101.3" y2="55.1" stroke="#dcc4aa" stroke-width="0.96" opacity="0.66"/><line x1="63.1" y1="60.4" x2="66.8" y2="60.1" stroke="#dcc4aa" stroke-width="0.96" opacity="0.64"/><line x1="33.2" y1="50.5" x2="39.9" y2="50.0" stroke="#e2ceb6" stroke-width="1.39" opacity="0.39"/>
<path d="M48 62 Q62 50 76 55 Q92 59 112 57 L112 63 L48 63 Z" fill="#a05838" opacity="0.7"/>
<path d="M116 44 L158 42 L158 47 L114 49 Z" fill="#9a6446" opacity="0.5"/>
<path d="M0 57 Q20 54 44 57 L44 62 L0 62 Z" fill="#a86a4a" opacity="0.5"/>
</g>
<rect x="0" y="56" width="158" height="32" fill="url(#gnd)"/>
<g clip-path="url(#gc)" filter="url(#bl2)"><path d="M-23.7 86.4 Q86.3 44.4 196.3 86.4" fill="none" stroke="#a8603e" stroke-width="0.85" opacity="0.67"/><path d="M-22.7 87.8 Q87.3 45.8 197.3 87.8" fill="none" stroke="#a8603e" stroke-width="1.07" opacity="0.56"/><path d="M-53.9 88.4 Q56.1 46.4 166.1 88.4" fill="none" stroke="#e2c8ae" stroke-width="0.96" opacity="0.70"/><path d="M-46.6 91.0 Q63.4 49.0 173.4 91.0" fill="none" stroke="#a05a3a" stroke-width="0.65" opacity="0.56"/><path d="M-19.9 92.4 Q90.1 50.4 200.1 92.4" fill="none" stroke="#a8603e" stroke-width="0.67" opacity="0.57"/><path d="M-53.3 93.7 Q56.7 51.7 166.7 93.7" fill="none" stroke="#e6d2bc" stroke-width="0.96" opacity="0.56"/><path d="M-53.0 95.4 Q57.0 53.4 167.0 95.4" fill="none" stroke="#a8603e" stroke-width="0.87" opacity="0.53"/><path d="M-39.2 95.9 Q70.8 53.9 180.8 95.9" fill="none" stroke="#a05a3a" stroke-width="1.04" opacity="0.43"/><path d="M-38.1 98.0 Q71.9 56.0 181.9 98.0" fill="none" stroke="#e2c8ae" stroke-width="1.15" opacity="0.64"/><path d="M-39.0 99.8 Q71.0 57.8 181.0 99.8" fill="none" stroke="#e2c8ae" stroke-width="0.96" opacity="0.47"/><path d="M-44.9 101.6 Q65.1 59.6 175.1 101.6" fill="none" stroke="#a05a3a" stroke-width="0.74" opacity="0.55"/><path d="M-0.8 102.3 Q109.2 60.3 219.2 102.3" fill="none" stroke="#dcbc9c" stroke-width="1.04" opacity="0.71"/><path d="M-48.5 104.1 Q61.5 62.1 171.5 104.1" fill="none" stroke="#a8603e" stroke-width="1.11" opacity="0.53"/><path d="M-35.6 105.6 Q74.4 63.6 184.4 105.6" fill="none" stroke="#e6d2bc" stroke-width="0.89" opacity="0.67"/><path d="M-48.9 107.6 Q61.1 65.6 171.1 107.6" fill="none" stroke="#e2c8ae" stroke-width="0.78" opacity="0.73"/><path d="M-21.6 108.0 Q88.4 66.0 198.4 108.0" fill="none" stroke="#dcbc9c" stroke-width="0.78" opacity="0.58"/><path d="M-39.3 109.4 Q70.7 67.4 180.7 109.4" fill="none" stroke="#dcbc9c" stroke-width="0.77" opacity="0.55"/><path d="M-5.5 111.8 Q104.5 69.8 214.5 111.8" fill="none" stroke="#a05a3a" stroke-width="0.69" opacity="0.56"/><path d="M-18.0 112.9 Q92.0 70.9 202.0 112.9" fill="none" stroke="#dcbc9c" stroke-width="0.69" opacity="0.67"/><path d="M-3.6 115.1 Q106.4 73.1 216.4 115.1" fill="none" stroke="#a05a3a" stroke-width="1.17" opacity="0.55"/><path d="M-42.7 116.0 Q67.3 74.0 177.3 116.0" fill="none" stroke="#a8603e" stroke-width="0.73" opacity="0.73"/><path d="M-42.2 116.9 Q67.8 74.9 177.8 116.9" fill="none" stroke="#a05a3a" stroke-width="1.13" opacity="0.68"/></g>
</symbol><clipPath id="fc0"><rect x="438" y="703" width="159" height="88"/></clipPath><clipPath id="fc1"><rect x="596" y="703" width="159" height="88"/></clipPath><clipPath id="fc2"><rect x="754" y="703" width="159" height="88"/></clipPath><clipPath id="fc3"><rect x="913" y="703" width="159" height="88"/></clipPath><clipPath id="fc4"><rect x="1071" y="703" width="159" height="88"/></clipPath><clipPath id="fc5"><rect x="1229" y="703" width="159" height="88"/></clipPath><clipPath id="fc6"><rect x="1387" y="703" width="159" height="88"/></clipPath>
<linearGradient id="skyg" x1="0" y1="0" x2="0" y2="1"><stop offset="0" stop-color="#b2b6be"/><stop offset="0.6" stop-color="#bec1c8"/><stop offset="1" stop-color="#cac8c2"/></linearGradient>
<filter id="skybl" x="-30%" y="-30%" width="160%" height="160%"><feGaussianBlur stdDeviation="3"/></filter>
<clipPath id="vc"><path d="M437.7 707 Q437.7 703 441.7 703 L1541.7 703 L1541.7 791 L437.7 791 Z"/></clipPath></defs>
<g clip-path="url(#vc)"><rect x="437" y="703" width="1105" height="88" fill="#b89478"/><g clip-path="url(#fc0)" ><g filter="url(#skybl)"><rect x="438" y="703" width="159" height="50" fill="url(#skyg)"/><ellipse cx="461.0" cy="723.2" rx="34.8" ry="9.4" fill="#eeeeee" opacity="0.70"/><ellipse cx="455.4" cy="709.9" rx="26.2" ry="13.5" fill="#dcdde0" opacity="0.83"/><ellipse cx="491.0" cy="717.4" rx="49.0" ry="8.0" fill="#e4e4e6" opacity="0.82"/><ellipse cx="496.5" cy="721.4" rx="48.9" ry="10.9" fill="#dcdde0" opacity="0.82"/><ellipse cx="567.2" cy="711.4" rx="29.5" ry="11.2" fill="#666a72" opacity="0.59"/><ellipse cx="572.5" cy="711.5" rx="47.8" ry="8.7" fill="#666a72" opacity="0.68"/><ellipse cx="483" cy="749" rx="20" ry="3.5" fill="#dcd6c8" opacity="0.9"/><ellipse cx="546" cy="750" rx="9" ry="3" fill="#e0d2ae" opacity="0.9"/></g></g><g clip-path="url(#fc1)" ><g filter="url(#skybl)"><rect x="596" y="703" width="159" height="50" fill="url(#skyg)"/><ellipse cx="687.8" cy="712.8" rx="36.7" ry="11.6" fill="#dcdde0" opacity="0.61"/><ellipse cx="631.0" cy="716.5" rx="33.2" ry="10.1" fill="#666a72" opacity="0.63"/><ellipse cx="621.4" cy="722.8" rx="36.8" ry="9.3" fill="#666a72" opacity="0.74"/><ellipse cx="659.8" cy="713.3" rx="30.3" ry="11.6" fill="#70747c" opacity="0.74"/><ellipse cx="647.9" cy="739.4" rx="30.7" ry="7.5" fill="#70747c" opacity="0.77"/><ellipse cx="662.1" cy="739.9" rx="33.6" ry="7.2" fill="#666a72" opacity="0.76"/><ellipse cx="641" cy="749" rx="20" ry="3.5" fill="#dcd6c8" opacity="0.9"/><ellipse cx="704" cy="750" rx="9" ry="3" fill="#e0d2ae" opacity="0.9"/></g></g><g clip-path="url(#fc2)" ><g filter="url(#skybl)"><rect x="754" y="703" width="159" height="50" fill="url(#skyg)"/><ellipse cx="777.4" cy="729.6" rx="41.5" ry="8.3" fill="#7a7e86" opacity="0.64"/><ellipse cx="821.8" cy="728.3" rx="40.5" ry="10.6" fill="#eeeeee" opacity="0.81"/><ellipse cx="870.2" cy="720.1" rx="27.1" ry="7.4" fill="#666a72" opacity="0.61"/><ellipse cx="844.9" cy="740.9" rx="38.3" ry="8.0" fill="#eeeeee" opacity="0.74"/><ellipse cx="853.6" cy="731.8" rx="45.7" ry="9.6" fill="#666a72" opacity="0.61"/><ellipse cx="821.5" cy="729.1" rx="47.7" ry="8.2" fill="#e4e4e6" opacity="0.61"/><ellipse cx="799" cy="749" rx="20" ry="3.5" fill="#dcd6c8" opacity="0.9"/><ellipse cx="862" cy="750" rx="9" ry="3" fill="#e0d2ae" opacity="0.9"/></g></g><g clip-path="url(#fc3)" ><g filter="url(#skybl)"><rect x="913" y="703" width="159" height="50" fill="url(#skyg)"/><ellipse cx="1067.7" cy="723.3" rx="45.5" ry="11.8" fill="#eeeeee" opacity="0.82"/><ellipse cx="1029.8" cy="731.2" rx="46.8" ry="7.8" fill="#70747c" opacity="0.57"/><ellipse cx="948.2" cy="738.1" rx="49.0" ry="11.8" fill="#666a72" opacity="0.73"/><ellipse cx="959.4" cy="734.8" rx="43.1" ry="9.9" fill="#eeeeee" opacity="0.79"/><ellipse cx="1003.5" cy="738.1" rx="30.1" ry="8.5" fill="#70747c" opacity="0.76"/><ellipse cx="993.6" cy="738.0" rx="43.9" ry="10.7" fill="#e4e4e6" opacity="0.79"/><ellipse cx="958" cy="749" rx="20" ry="3.5" fill="#dcd6c8" opacity="0.9"/><ellipse cx="1021" cy="750" rx="9" ry="3" fill="#e0d2ae" opacity="0.9"/></g></g><g clip-path="url(#fc4)" ><g filter="url(#skybl)"><rect x="1071" y="703" width="159" height="50" fill="url(#skyg)"/><ellipse cx="1222.7" cy="739.9" rx="34.8" ry="7.0" fill="#e4e4e6" opacity="0.59"/><ellipse cx="1200.2" cy="741.5" rx="28.0" ry="11.6" fill="#666a72" opacity="0.65"/><ellipse cx="1173.0" cy="739.5" rx="49.6" ry="13.6" fill="#70747c" opacity="0.60"/><ellipse cx="1118.3" cy="706.6" rx="31.5" ry="8.3" fill="#666a72" opacity="0.72"/><ellipse cx="1086.8" cy="728.9" rx="31.3" ry="9.9" fill="#e4e4e6" opacity="0.83"/><ellipse cx="1126.3" cy="744.7" rx="26.0" ry="11.7" fill="#666a72" opacity="0.79"/><ellipse cx="1116" cy="749" rx="20" ry="3.5" fill="#dcd6c8" opacity="0.9"/><ellipse cx="1179" cy="750" rx="9" ry="3" fill="#e0d2ae" opacity="0.9"/></g></g><g clip-path="url(#fc5)" ><g filter="url(#skybl)"><rect x="1229" y="703" width="159" height="50" fill="url(#skyg)"/><ellipse cx="1367.7" cy="719.0" rx="32.8" ry="12.4" fill="#e4e4e6" opacity="0.65"/><ellipse cx="1254.9" cy="718.9" rx="27.5" ry="9.8" fill="#e4e4e6" opacity="0.83"/><ellipse cx="1362.8" cy="729.6" rx="47.0" ry="13.4" fill="#dcdde0" opacity="0.62"/><ellipse cx="1385.1" cy="729.5" rx="47.9" ry="7.4" fill="#eeeeee" opacity="0.65"/><ellipse cx="1359.2" cy="742.7" rx="44.1" ry="13.2" fill="#7a7e86" opacity="0.84"/><ellipse cx="1383.2" cy="734.4" rx="47.0" ry="11.0" fill="#7a7e86" opacity="0.74"/><ellipse cx="1274" cy="749" rx="20" ry="3.5" fill="#dcd6c8" opacity="0.9"/><ellipse cx="1337" cy="750" rx="9" ry="3" fill="#e0d2ae" opacity="0.9"/></g></g><g clip-path="url(#fc6)" ><g filter="url(#skybl)"><rect x="1387" y="703" width="159" height="50" fill="url(#skyg)"/><ellipse cx="1499.3" cy="741.0" rx="45.5" ry="7.4" fill="#7a7e86" opacity="0.79"/><ellipse cx="1514.1" cy="712.5" rx="35.9" ry="12.2" fill="#dcdde0" opacity="0.63"/><ellipse cx="1422.2" cy="723.7" rx="28.4" ry="8.9" fill="#eeeeee" opacity="0.70"/><ellipse cx="1398.8" cy="719.0" rx="28.5" ry="7.6" fill="#e4e4e6" opacity="0.58"/><ellipse cx="1437.7" cy="734.0" rx="36.1" ry="10.9" fill="#dcdde0" opacity="0.73"/><ellipse cx="1465.5" cy="722.0" rx="37.3" ry="8.1" fill="#666a72" opacity="0.61"/><ellipse cx="1432" cy="749" rx="20" ry="3.5" fill="#dcd6c8" opacity="0.9"/><ellipse cx="1495" cy="750" rx="9" ry="3" fill="#e0d2ae" opacity="0.9"/></g></g><use href="#fr" x="438" y="703" width="159" height="88"/><use href="#fr" x="596" y="703" width="159" height="88"/><use href="#fr" x="754" y="703" width="159" height="88"/><use href="#fr" x="913" y="703" width="159" height="88"/><use href="#fr" x="1071" y="703" width="159" height="88"/><use href="#fr" x="1229" y="703" width="159" height="88"/><use href="#fr" x="1387" y="703" width="159" height="88"/></g>
</svg>
<div class="r" style="left:437.7px;top:791px;width:1104px;height:12px;background:linear-gradient(#1f449e,#26407a 40%,#363b48)"></div>
<div class="r" style="left:0px;top:809.6px;width:1541.7px;height:1.8px;background:#2a2a2a;"></div>
<div class="r" style="left:0px;top:811.4px;width:1541.7px;height:14px;background:#363636;"></div>
<div class="r" style="left:3.8px;top:825.4px;width:1537.9px;height:86.6px;background:#1b673b;border-radius:3px 0 0 0"></div>
<div class="r" style="left:3.8px;top:860.3px;width:1537.9px;height:1.2px;background:#3c9e62;"></div>
<div class="r" style="left:3.8px;top:825.4px;width:1537.9px;height:1px;background:#0f7a3e;"></div>
<svg style="left:0;top:0" width="1" height="1"><text x="7.70" y="839.20" font-family="'Liberation Sans'" font-size="13.9" font-weight="normal" fill="#f0f0f0">1,4 мин – Travel</text></svg>
<svg style="left:0;top:0" width="1560" height="932"><path d="M19.2 912.0 L19.2 909.6 L19.2 908.9 L20.4 909.8 L21.6 910.2 L22.8 909.2 L24.0 908.7 L25.2 909.5 L26.4 909.7 L27.6 910.1 L28.8 908.6 L30.0 908.5 L31.2 909.7 L32.4 909.5 L33.6 910.0 L34.8 909.6 L36.0 908.9 L37.2 908.7 L38.4 910.4 L39.6 908.6 L40.8 908.2 L42.0 907.9 L43.2 908.5 L44.4 908.5 L45.6 908.1 L46.8 908.1 L48.0 908.2 L49.2 908.4 L50.4 908.5 L51.6 907.9 L52.8 906.5 L54.0 907.9 L55.2 906.5 L56.4 907.1 L57.6 906.2 L58.8 907.0 L60.0 906.4 L61.2 906.8 L62.4 908.5 L63.6 906.4 L64.8 906.8 L66.0 905.3 L67.2 905.8 L68.4 906.2 L69.6 905.6 L70.8 905.7 L72.0 905.4 L73.2 904.5 L74.4 905.3 L75.6 904.3 L76.8 905.7 L78.0 904.1 L79.2 904.7 L80.4 904.1 L81.6 904.5 L82.8 903.4 L84.0 904.1 L85.2 903.3 L86.4 903.9 L87.6 903.3 L88.8 902.8 L90.0 902.1 L91.2 902.8 L92.4 902.4 L93.6 902.9 L94.8 901.5 L96.0 901.8 L97.2 901.6 L98.4 901.2 L99.6 901.0 L100.8 900.7 L102.0 900.0 L103.2 899.5 L104.4 899.7 L105.6 900.0 L106.8 900.4 L108.0 899.8 L109.2 899.6 L110.4 899.2 L111.6 898.9 L112.8 898.4 L114.0 898.5 L115.2 898.8 L116.4 897.3 L117.6 896.8 L118.8 898.2 L120.0 896.9 L121.2 897.0 L122.4 896.7 L123.6 895.2 L124.8 897.1 L126.0 896.5 L127.2 895.2 L128.4 895.3 L129.6 894.6 L130.8 893.8 L132.0 893.9 L133.2 893.9 L134.4 894.1 L135.6 893.6 L136.8 892.9 L138.0 893.4 L139.2 891.8 L140.4 892.5 L141.6 892.3 L142.8 891.2 L144.0 890.0 L145.2 890.2 L146.4 890.6 L147.6 890.5 L148.8 890.8 L150.0 888.9 L151.2 889.2 L152.4 889.3 L153.6 888.5 L154.8 886.8 L156.0 888.4 L157.2 889.0 L158.4 887.9 L159.6 886.4 L160.8 886.4 L162.0 886.4 L163.2 887.5 L164.4 886.0 L165.6 885.4 L166.8 885.9 L168.0 884.6 L169.2 885.4 L170.4 883.5 L171.6 883.3 L172.8 883.7 L174.0 883.7 L175.2 882.9 L176.4 882.4 L177.0 869.6 L178.1 867.8 L179.2 871.7 L180.3 871.3 L181.4 874.3 L182.5 868.5 L183.6 871.6 L184.7 871.6 L185.8 870.5 L186.9 870.5 L188.0 869.6 L189.1 871.4 L190.2 873.4 L191.3 871.6 L192.4 873.2 L193.5 869.7 L194.6 872.3 L195.7 872.5 L196.8 871.2 L197.9 874.8 L199.0 873.3 L200.1 873.1 L201.2 871.6 L202.3 871.7 L203.4 874.2 L204.5 874.9 L205.6 873.2 L206.7 876.3 L207.8 875.6 L208.9 873.6 L210.0 876.3 L211.1 872.4 L212.2 873.9 L213.3 875.6 L214.4 874.2 L215.5 878.1 L216.6 875.9 L217.7 875.4 L218.8 876.7 L219.9 876.1 L221.0 876.5 L222.1 876.7 L223.2 877.8 L224.3 873.1 L225.4 878.5 L226.5 877.0 L227.6 876.5 L228.7 875.5 L229.8 877.9 L230.9 877.1 L232.0 875.3 L233.1 875.4 L234.2 879.5 L235.0 870.0 L236.1 874.1 L237.2 868.3 L238.3 873.4 L239.4 869.5 L240.5 868.3 L241.6 869.6 L242.7 870.1 L243.8 873.8 L244.9 872.9 L246.0 869.9 L247.1 872.3 L248.2 873.9 L249.3 873.3 L250.4 870.7 L251.5 873.2 L252.6 875.4 L253.7 871.0 L254.8 872.5 L255.9 870.8 L257.0 874.7 L258.1 871.7 L259.2 873.0 L260.3 874.6 L261.4 874.8 L262.5 874.5 L263.6 875.8 L264.7 874.4 L265.8 875.1 L266.9 876.2 L268.0 875.9 L269.1 872.9 L270.2 874.3 L271.3 875.4 L272.4 876.9 L273.5 875.7 L274.6 874.3 L275.7 873.9 L275.8 872.0 L276.9 871.2 L278.0 870.6 L279.1 869.0 L280.2 868.9 L281.3 870.6 L282.4 870.5 L283.5 867.4 L284.6 869.8 L285.7 870.0 L286.8 870.6 L287.9 873.1 L289.0 871.2 L290.1 875.1 L291.2 869.8 L292.3 867.7 L293.4 870.8 L294.5 873.4 L295.6 870.6 L296.7 868.7 L297.8 871.6 L298.9 872.6 L300.0 869.3 L301.1 872.4 L302.2 869.2 L303.3 877.5 L304.4 871.5 L305.5 871.4 L306.6 874.7 L307.7 869.7 L308.8 871.0 L309.9 871.7 L311.0 871.4 L312.1 872.5 L313.2 871.9 L314.3 870.0 L315.4 871.2 L316.5 872.1 L317.6 868.0 L318.7 871.1 L319.8 868.9 L320.8 869.5 L321.9 872.2 L323.0 869.5 L324.1 870.4 L325.2 870.5 L326.3 870.1 L327.4 869.1 L328.5 871.5 L329.6 870.6 L330.7 869.4 L331.8 870.0 L332.9 870.1 L334.0 869.3 L335.1 872.3 L336.2 871.9 L337.3 869.9 L338.4 874.3 L339.5 874.1 L340.6 871.3 L341.7 870.4 L342.8 872.4 L343.9 875.0 L345.0 870.7 L346.1 873.6 L347.2 871.9 L348.3 871.2 L349.4 871.6 L350.5 875.2 L351.6 871.4 L352.7 871.6 L353.8 872.0 L354.9 875.2 L356.0 875.1 L356.5 867.9 L357.6 868.3 L358.7 867.7 L359.8 870.0 L360.9 869.6 L362.0 867.5 L363.1 871.0 L364.2 872.3 L365.3 867.5 L366.4 868.7 L367.5 870.8 L368.6 868.5 L369.7 870.6 L370.8 870.1 L371.9 867.9 L373.0 868.1 L374.1 869.0 L375.2 868.3 L376.3 867.7 L377.4 872.1 L378.5 871.3 L379.6 870.1 L380.7 868.0 L381.8 870.4 L382.9 868.8 L384.0 868.1 L385.1 869.9 L386.2 869.1 L387.3 868.1 L388.4 869.5 L389.5 869.3 L390.6 872.3 L391.7 872.9 L392.8 869.8 L393.9 871.6 L395.0 869.5 L396.1 869.1 L397.2 871.6 L398.3 871.1 L399.4 871.0 L400.5 869.5 L401.3 870.0 L402.4 867.8 L403.5 865.9 L404.6 865.1 L405.7 868.4 L406.8 871.1 L407.9 870.0 L409.0 870.3 L410.1 869.5 L411.2 869.8 L412.3 868.3 L413.4 870.3 L414.5 870.7 L415.6 870.7 L416.7 870.6 L417.8 873.4 L418.9 868.6 L420.0 869.7 L421.1 873.7 L422.2 873.0 L423.3 872.2 L424.4 870.6 L425.5 871.5 L426.6 870.6 L427.7 880.3 L428.8 871.6 L429.9 867.3 L431.0 871.8 L432.1 872.2 L433.2 874.1 L434.3 872.2 L435.4 871.9 L436.5 870.8 L437.6 872.2 L438.7 875.1 L439.8 874.6 L440.9 872.9 L442.0 873.2 L443.0 868.6 L444.1 870.8 L445.2 870.9 L446.3 871.5 L447.4 868.3 L448.5 870.0 L449.6 870.6 L450.7 873.3 L451.8 872.6 L452.9 869.2 L454.0 871.6 L455.1 868.5 L456.2 875.0 L457.3 872.5 L458.4 872.9 L459.5 872.3 L460.6 874.5 L461.7 873.8 L462.8 873.8 L463.9 877.6 L465.0 875.0 L466.1 873.6 L466.9 870.8 L468.0 870.2 L469.1 868.9 L470.2 872.8 L471.3 869.5 L472.4 870.6 L473.5 870.4 L474.6 869.8 L475.7 872.7 L476.8 870.4 L477.9 871.1 L479.0 868.6 L480.1 869.9 L481.2 872.2 L482.3 868.5 L483.4 872.9 L484.5 871.5 L485.6 869.8 L486.7 873.1 L487.8 870.3 L488.9 872.2 L490.0 873.5 L491.1 874.5 L492.2 872.0 L493.3 872.6 L493.7 871.8 L494.8 868.5 L495.9 870.3 L497.0 866.4 L498.1 870.8 L499.2 873.2 L500.3 867.8 L501.4 870.4 L502.5 869.1 L503.6 873.4 L504.7 866.6 L505.8 870.7 L506.9 870.4 L508.0 870.1 L509.1 869.6 L510.2 870.7 L511.3 871.9 L512.4 869.4 L513.5 868.6 L514.6 871.1 L515.7 872.3 L516.8 874.8 L517.9 873.6 L519.0 870.4 L520.1 870.8 L521.2 871.7 L522.3 870.6 L523.4 872.3 L524.5 871.9 L525.6 871.1 L526.7 872.2 L527.8 872.7 L528.9 870.7 L530.0 873.4 L531.1 872.4 L532.2 870.4 L533.3 873.8 L534.4 873.4 L535.5 875.1 L536.3 870.8 L537.4 871.0 L538.5 871.0 L539.6 870.4 L540.7 871.1 L541.8 872.0 L542.9 870.1 L544.0 871.1 L545.1 871.4 L546.2 872.4 L547.3 870.4 L548.4 870.0 L549.5 872.6 L550.6 869.8 L551.7 872.9 L552.8 873.2 L553.9 874.7 L555.0 872.2 L556.1 872.4 L557.2 874.1 L558.3 872.2 L559.4 870.2 L560.5 874.1 L561.6 871.3 L562.7 871.0 L563.8 874.8 L564.9 873.6 L566.0 874.1 L567.1 875.6 L568.2 873.3 L569.3 877.7 L570.4 872.2 L571.5 875.8 L572.6 872.7 L573.2 870.7 L574.3 870.4 L575.4 869.6 L576.5 873.2 L577.6 872.0 L578.7 871.5 L579.8 870.7 L580.9 871.4 L582.0 872.4 L583.1 872.8 L584.2 872.9 L585.3 871.6 L586.4 874.6 L587.5 873.0 L588.6 871.3 L589.7 870.1 L590.8 874.0 L591.9 872.6 L593.0 875.0 L594.1 874.3 L595.2 872.6 L596.3 875.1 L597.4 873.4 L598.5 875.8 L599.6 874.6 L600.7 874.5 L601.8 876.7 L602.9 875.8 L604.0 876.7 L604.5 870.4 L605.6 871.7 L606.7 870.0 L607.8 869.4 L608.9 869.6 L610.0 866.6 L611.1 873.1 L612.2 871.9 L613.3 871.0 L614.4 873.1 L615.5 871.4 L616.6 869.5 L617.7 871.0 L618.8 869.9 L619.9 874.4 L621.0 874.7 L622.1 871.5 L623.2 871.4 L624.3 873.2 L625.4 872.0 L626.5 873.4 L627.6 874.6 L628.7 874.2 L629.8 874.5 L630.9 875.6 L632.0 873.6 L633.1 871.9 L633.4 871.3 L634.5 868.9 L635.6 871.0 L636.7 870.2 L637.8 873.2 L638.9 871.5 L640.0 869.7 L641.1 872.8 L642.2 869.7 L643.3 871.4 L644.4 872.2 L645.5 872.9 L646.6 873.6 L647.7 870.2 L648.8 874.6 L649.9 873.2 L651.0 873.8 L652.1 874.4 L653.2 873.8 L654.3 874.4 L655.4 874.5 L656.5 874.6 L657.6 874.5 L658.7 875.5 L659.8 876.2 L660.9 874.0 L662.0 873.4 L663.1 875.0 L664.0 867.6 L665.1 868.8 L666.2 874.7 L667.3 874.8 L668.4 871.1 L669.5 867.8 L670.6 870.8 L671.7 866.1 L672.8 867.9 L673.9 874.0 L675.0 869.3 L676.1 868.7 L677.2 872.2 L678.3 870.5 L679.4 871.3 L680.5 869.6 L681.6 868.2 L682.7 873.0 L683.8 872.8 L684.9 871.7 L686.0 873.7 L687.1 872.1 L688.2 872.9 L689.3 873.6 L690.4 869.8 L691.5 876.3 L692.6 873.3 L693.7 875.0 L694.8 872.4 L695.9 872.9 L697.0 872.1 L698.1 874.2 L699.2 875.7 L700.3 874.1 L701.4 874.8 L702.5 875.3 L703.6 875.6 L704.7 874.1 L705.8 874.6 L706.9 877.3 L708.0 869.8 L709.1 874.4 L710.2 875.4 L711.3 873.4 L711.9 869.1 L713.0 867.1 L714.1 865.8 L715.2 868.1 L716.3 870.5 L717.4 869.6 L718.5 867.2 L719.6 871.4 L720.7 870.3 L721.8 871.9 L722.9 869.7 L724.0 870.2 L725.1 868.4 L726.2 868.9 L727.3 871.0 L728.4 871.1 L729.5 873.0 L730.6 870.8 L731.7 872.2 L732.8 872.8 L733.9 867.6 L735.0 871.2 L736.1 870.8 L737.2 874.6 L738.3 873.1 L739.4 871.2 L740.5 870.9 L741.6 872.7 L742.7 871.7 L743.8 871.4 L744.9 871.3 L746.0 873.3 L747.1 875.3 L748.2 874.7 L749.3 872.3 L750.4 869.1 L750.6 868.7 L751.7 868.0 L752.8 870.9 L753.9 868.1 L755.0 868.4 L756.1 871.6 L757.2 871.4 L758.3 871.7 L759.4 868.9 L760.5 869.1 L761.6 868.9 L762.7 872.2 L763.8 870.1 L764.9 872.8 L766.0 870.7 L767.1 871.5 L768.2 871.0 L769.3 872.4 L770.4 870.4 L771.5 871.5 L772.6 874.0 L773.7 872.0 L774.8 872.3 L775.9 872.7 L777.0 872.0 L778.1 874.4 L779.2 873.2 L780.3 872.7 L781.4 874.4 L782.0 870.2 L783.1 870.0 L784.2 871.9 L785.3 869.8 L786.4 868.3 L787.5 869.6 L788.6 871.2 L789.7 871.0 L790.8 879.0 L791.9 872.0 L793.0 871.9 L794.1 871.2 L795.2 873.1 L796.3 868.1 L797.4 872.1 L798.5 869.9 L799.6 874.0 L800.7 875.5 L801.8 872.6 L802.9 872.6 L804.0 872.7 L805.1 871.7 L806.2 879.3 L807.3 871.4 L808.4 874.6 L809.5 871.3 L810.6 874.6 L811.7 872.8 L812.8 876.1 L813.9 873.3 L815.0 873.9 L816.1 875.2 L817.2 873.9 L818.3 873.3 L819.4 873.4 L820.5 872.4 L821.6 874.9 L822.7 875.9 L823.8 876.8 L824.9 873.6 L826.0 874.3 L827.1 868.6 L828.2 871.9 L829.3 870.0 L830.4 870.8 L831.5 869.0 L832.6 869.3 L833.7 871.0 L834.8 873.4 L835.9 870.5 L837.0 869.4 L838.1 871.7 L839.2 868.9 L840.3 869.8 L841.4 871.5 L842.5 874.2 L843.6 871.3 L844.7 874.0 L845.8 868.2 L846.9 872.6 L848.0 874.1 L849.1 872.9 L850.2 875.1 L851.3 872.1 L852.4 872.5 L853.5 870.7 L854.6 872.9 L855.7 872.9 L856.8 874.9 L857.9 874.0 L859.0 875.7 L860.1 877.9 L861.2 876.6 L862.3 874.2 L863.4 878.3 L864.3 872.6 L865.4 869.0 L866.5 869.9 L867.6 871.2 L868.7 870.9 L869.8 871.7 L870.9 872.7 L872.0 872.9 L873.1 875.4 L874.2 868.7 L875.3 871.6 L876.4 870.7 L877.5 873.1 L878.6 872.8 L879.7 875.8 L880.8 873.7 L881.9 873.3 L883.0 873.4 L884.1 879.5 L885.2 874.5 L886.3 872.5 L887.4 873.8 L888.5 874.6 L889.6 875.1 L890.7 874.6 L891.8 876.8 L892.9 875.2 L894.0 875.9 L895.1 875.5 L896.2 873.4 L897.3 871.4 L898.4 877.8 L899.5 875.0 L900.6 876.3 L901.1 875.1 L902.2 867.7 L903.3 870.3 L904.4 869.3 L905.5 868.0 L906.6 872.9 L907.7 871.7 L908.8 872.0 L909.9 870.0 L911.0 871.2 L912.1 870.5 L913.2 871.3 L914.3 869.2 L915.4 870.8 L916.5 871.5 L917.6 872.2 L918.7 872.5 L919.8 873.0 L920.9 870.1 L922.0 872.7 L923.1 872.7 L924.2 870.7 L925.3 870.7 L926.4 871.8 L927.5 870.0 L928.6 873.4 L929.7 872.2 L930.8 874.7 L931.9 872.3 L933.0 870.0 L934.1 871.6 L935.2 870.4 L936.3 871.0 L937.4 870.2 L938.5 873.3 L939.6 872.8 L940.7 867.7 L941.8 871.6 L942.9 871.2 L944.0 872.1 L945.1 871.8 L946.2 873.8 L947.3 872.7 L948.4 871.4 L949.5 874.2 L950.6 872.1 L951.7 872.3 L952.8 873.8 L953.9 875.0 L955.0 872.0 L956.1 874.5 L957.2 875.9 L958.3 872.2 L959.4 873.5 L960.5 873.4 L961.6 873.4 L962.7 873.6 L963.6 871.0 L964.7 871.9 L965.8 868.3 L966.9 869.1 L968.0 867.2 L969.1 870.7 L970.2 872.6 L971.3 870.4 L972.4 871.6 L973.5 873.6 L974.6 869.3 L975.7 871.0 L976.8 869.5 L977.9 872.1 L979.0 869.6 L980.1 870.1 L981.2 868.4 L982.3 873.2 L983.4 870.6 L984.5 872.1 L985.6 871.2 L986.7 869.2 L987.8 868.8 L988.9 870.7 L990.0 871.5 L991.1 871.4 L992.2 874.2 L993.3 871.4 L994.4 870.4 L995.5 872.4 L996.6 871.8 L997.7 873.3 L998.8 873.4 L999.9 868.5 L1001.0 872.3 L1002.1 871.1 L1003.2 873.6 L1004.3 871.5 L1005.4 872.0 L1006.5 873.9 L1007.6 871.4 L1008.7 873.4 L1009.8 870.6 L1010.9 872.1 L1011.2 871.6 L1012.3 867.5 L1013.4 872.1 L1014.5 869.9 L1015.6 868.8 L1016.7 868.2 L1017.8 871.2 L1018.9 866.8 L1020.0 872.5 L1021.1 870.9 L1022.2 872.2 L1023.3 868.4 L1024.4 869.6 L1025.5 871.2 L1026.6 868.7 L1027.7 867.0 L1028.8 870.2 L1029.9 872.6 L1031.0 871.2 L1032.1 869.5 L1033.2 869.6 L1034.3 873.2 L1035.4 873.6 L1036.5 873.5 L1037.6 871.8 L1038.7 871.3 L1039.8 869.8 L1040.9 874.0 L1042.0 872.9 L1043.1 873.8 L1044.2 872.4 L1045.3 872.9 L1046.4 868.8 L1047.5 873.8 L1048.6 875.6 L1049.7 872.2 L1050.8 873.8 L1051.9 874.7 L1053.0 873.7 L1053.3 871.2 L1054.4 866.8 L1055.5 870.5 L1056.6 873.1 L1057.7 870.1 L1058.8 869.9 L1059.9 867.7 L1061.0 870.3 L1062.1 868.5 L1063.2 871.2 L1064.3 870.6 L1065.4 869.9 L1066.5 870.6 L1067.6 870.2 L1068.7 871.5 L1069.8 872.5 L1070.9 873.8 L1072.0 870.4 L1073.1 870.9 L1074.2 873.1 L1075.3 873.2 L1076.4 869.5 L1077.5 873.3 L1078.6 870.9 L1079.7 872.1 L1080.8 871.1 L1081.9 876.7 L1083.0 870.3 L1084.1 875.4 L1084.2 869.5 L1085.3 870.8 L1086.4 870.2 L1087.5 871.7 L1088.6 869.8 L1089.7 867.4 L1090.8 871.4 L1091.9 874.7 L1093.0 872.7 L1094.1 873.4 L1095.2 872.4 L1096.3 870.7 L1097.4 870.7 L1098.5 874.3 L1099.6 870.6 L1100.7 873.3 L1101.8 871.8 L1102.9 867.0 L1104.0 870.1 L1105.1 872.4 L1106.2 871.8 L1107.3 874.8 L1108.4 871.9 L1109.5 874.5 L1110.6 871.4 L1111.7 870.6 L1112.8 871.9 L1113.9 878.0 L1115.0 874.7 L1116.1 874.9 L1117.2 873.7 L1118.3 874.4 L1119.4 875.5 L1120.5 875.3 L1121.6 876.4 L1122.7 874.9 L1123.8 874.6 L1124.9 878.3 L1126.0 872.8 L1127.1 875.9 L1128.2 875.5 L1128.6 871.0 L1129.7 871.8 L1130.8 866.3 L1131.9 879.1 L1133.0 869.3 L1134.1 869.9 L1135.2 870.5 L1136.3 867.5 L1137.4 871.1 L1138.5 868.6 L1139.6 872.9 L1140.7 869.4 L1141.8 870.3 L1142.9 873.3 L1144.0 874.7 L1145.1 872.0 L1146.2 871.4 L1147.3 871.9 L1148.4 871.4 L1149.5 874.3 L1150.6 872.5 L1151.7 874.1 L1152.8 875.4 L1153.9 872.5 L1155.0 872.7 L1155.8 869.9 L1156.9 869.9 L1158.0 872.0 L1159.1 872.3 L1160.2 873.1 L1161.3 872.7 L1162.4 871.7 L1163.5 872.0 L1164.6 871.6 L1165.7 871.1 L1166.8 870.3 L1167.9 871.5 L1169.0 872.6 L1170.1 870.4 L1171.2 871.1 L1172.3 874.4 L1173.4 871.8 L1174.5 872.7 L1175.6 873.5 L1176.7 872.2 L1177.8 872.7 L1178.9 872.1 L1180.0 870.0 L1181.1 874.8 L1182.2 873.1 L1183.3 868.7 L1184.4 879.5 L1185.5 876.0 L1186.6 876.5 L1187.7 880.8 L1188.8 877.9 L1189.9 877.8 L1190.3 871.4 L1191.4 870.4 L1192.5 868.7 L1193.6 868.4 L1194.7 868.1 L1195.8 868.3 L1196.9 868.7 L1198.0 872.9 L1199.1 871.5 L1200.2 869.7 L1201.3 868.6 L1202.4 871.0 L1203.5 869.5 L1204.6 870.6 L1205.7 869.3 L1206.8 871.2 L1207.9 871.3 L1209.0 870.0 L1210.1 872.1 L1211.2 870.6 L1212.3 869.4 L1213.4 872.9 L1214.5 871.2 L1215.6 870.8 L1216.7 870.6 L1217.8 872.7 L1218.9 870.7 L1220.0 873.1 L1221.1 869.0 L1222.2 870.3 L1223.3 870.0 L1224.4 873.5 L1225.5 871.7 L1226.6 869.6 L1227.7 875.3 L1228.8 873.4 L1229.9 870.0 L1231.0 868.6 L1232.1 870.8 L1233.2 869.6 L1234.3 870.2 L1235.4 872.1 L1236.5 871.8 L1237.6 873.6 L1238.7 870.8 L1239.8 872.7 L1240.9 873.4 L1242.0 869.7 L1243.1 871.2 L1244.2 874.6 L1245.3 876.0 L1246.4 872.5 L1247.5 882.0 L1248.6 876.1 L1249.7 875.4 L1250.8 873.2 L1251.9 872.8 L1252.3 877.3 L1253.4 870.6 L1254.5 870.5 L1255.6 871.4 L1256.7 870.0 L1257.8 868.8 L1258.9 870.7 L1260.0 868.4 L1261.1 868.9 L1262.2 867.0 L1263.3 867.4 L1264.4 870.3 L1265.5 871.2 L1266.6 870.3 L1267.7 870.5 L1268.8 869.0 L1269.9 867.7 L1271.0 875.7 L1272.1 870.5 L1273.2 872.7 L1274.3 870.7 L1275.4 868.1 L1276.5 870.9 L1277.6 869.5 L1278.7 871.6 L1279.8 870.5 L1280.9 870.4 L1282.0 872.5 L1283.1 870.2 L1284.2 869.8 L1285.3 869.0 L1286.4 869.8 L1287.5 869.2 L1288.6 872.0 L1289.7 871.5 L1290.8 871.9 L1291.8 873.5 L1292.9 869.5 L1294.0 868.6 L1295.1 869.0 L1296.2 867.8 L1297.3 871.4 L1298.4 869.1 L1299.5 867.3 L1300.6 867.9 L1301.7 867.1 L1302.8 871.6 L1303.9 870.6 L1305.0 871.8 L1306.1 872.4 L1307.2 871.6 L1308.3 870.7 L1309.4 872.8 L1310.5 872.1 L1311.6 872.7 L1312.7 871.5 L1313.8 872.5 L1314.9 872.6 L1316.0 870.1 L1317.1 872.6 L1318.2 874.2 L1319.3 870.4 L1320.4 871.0 L1320.9 867.9 L1322.0 870.0 L1323.1 869.3 L1324.2 872.3 L1325.3 871.7 L1326.4 869.7 L1327.5 867.9 L1328.6 869.3 L1329.7 869.3 L1330.8 873.4 L1331.9 869.3 L1333.0 872.6 L1334.1 870.1 L1335.2 867.6 L1336.3 871.2 L1337.4 870.6 L1338.5 869.9 L1339.6 872.0 L1340.7 870.0 L1341.8 871.8 L1342.9 872.0 L1343.4 870.1 L1344.5 870.2 L1345.6 869.8 L1346.7 869.0 L1347.8 870.0 L1348.9 869.4 L1350.0 871.1 L1351.1 871.6 L1352.2 871.7 L1353.3 872.1 L1354.4 873.7 L1355.5 870.3 L1356.6 873.9 L1357.7 872.8 L1358.8 872.7 L1359.9 872.5 L1361.0 870.9 L1362.1 874.7 L1363.2 873.7 L1364.3 874.1 L1365.4 872.9 L1366.5 874.1 L1367.6 875.5 L1368.7 872.3 L1369.8 875.6 L1370.9 875.3 L1372.0 876.3 L1373.1 877.0 L1374.2 874.4 L1375.3 875.7 L1376.2 868.0 L1377.3 868.4 L1378.4 870.3 L1379.5 868.9 L1380.6 872.6 L1381.7 879.0 L1382.8 872.8 L1383.9 871.2 L1385.0 870.0 L1386.1 869.9 L1387.2 870.0 L1388.3 868.2 L1389.4 869.5 L1390.5 870.6 L1391.6 866.9 L1392.7 871.8 L1393.8 869.3 L1394.9 871.7 L1396.0 871.6 L1397.1 872.7 L1398.2 869.3 L1399.3 874.6 L1400.4 874.1 L1401.5 872.6 L1402.6 871.2 L1403.7 869.8 L1404.8 875.5 L1404.9 869.1 L1406.0 871.9 L1407.1 870.0 L1408.2 869.4 L1409.3 867.3 L1410.4 871.0 L1411.5 880.3 L1412.6 869.1 L1413.7 871.0 L1414.8 870.4 L1415.9 871.9 L1417.0 872.5 L1418.1 872.2 L1419.2 872.9 L1420.3 876.5 L1421.4 874.5 L1422.5 873.7 L1423.6 872.9 L1424.7 873.1 L1425.8 873.4 L1426.9 870.4 L1428.0 873.4 L1429.1 871.2 L1430.2 870.2 L1431.3 874.4 L1432.4 870.4 L1433.5 874.5 L1434.6 873.1 L1435.7 875.5 L1436.5 869.3 L1437.6 870.2 L1438.7 865.5 L1439.8 870.7 L1440.9 869.9 L1442.0 870.6 L1443.1 871.6 L1444.2 868.9 L1445.3 871.9 L1446.4 867.4 L1447.5 873.1 L1448.6 865.6 L1449.7 876.4 L1450.8 871.0 L1451.9 871.7 L1453.0 871.9 L1454.1 871.8 L1455.2 870.7 L1456.3 873.6 L1457.4 870.5 L1458.5 872.2 L1459.6 871.8 L1460.7 874.6 L1461.8 874.1 L1462.3 872.6 L1463.4 870.4 L1464.5 869.4 L1465.6 872.3 L1466.7 871.1 L1467.8 871.6 L1468.9 869.3 L1470.0 871.2 L1471.1 871.7 L1472.2 872.5 L1473.3 870.2 L1474.4 871.2 L1475.5 872.3 L1476.6 873.4 L1477.7 873.4 L1478.8 874.4 L1479.9 872.2 L1481.0 874.4 L1482.1 874.9 L1483.2 872.7 L1484.3 870.9 L1485.4 874.3 L1486.5 868.5 L1487.6 880.0 L1488.7 873.3 L1489.8 871.8 L1490.9 872.7 L1492.0 872.6 L1493.1 873.7 L1494.2 872.8 L1495.3 873.9 L1496.4 875.3 L1497.5 869.6 L1498.6 870.8 L1499.7 872.9 L1500.8 875.8 L1501.9 875.7 L1503.0 874.8 L1504.1 874.4 L1505.2 874.8 L1506.3 876.0 L1507.4 875.5 L1508.5 876.2 L1508.6 871.6 L1509.7 870.5 L1510.8 874.5 L1511.9 868.4 L1513.0 871.6 L1514.1 869.4 L1515.2 871.6 L1516.3 873.5 L1517.4 868.9 L1518.5 871.4 L1519.6 876.6 L1520.7 872.3 L1521.8 872.0 L1522.9 873.3 L1524.0 870.7 L1525.1 871.7 L1526.2 872.7 L1527.3 873.1 L1528.4 871.8 L1529.5 870.8 L1530.6 873.1 L1531.7 874.7 L1532.8 873.5 L1533.9 875.5 L1535.0 874.9 L1536.1 874.4 L1537.2 875.3 L1537.6 867.8 L1538.7 869.6 L1539.8 870.9 L1540.9 870.8 L1541.7 872.0 L1541.7 912.0 Z" fill="#25a05a"/></svg>
<div class="r" style="left:0px;top:912px;width:1541.7px;height:20px;background:#404040;"></div>
<div class="r" style="left:0px;top:912px;width:1541.7px;height:1px;background:#38353a;"></div>
<div class="r" style="left:21.8px;top:917.4px;width:371.4px;height:9.6px;background:#7f7f7f;border-radius:5px"></div>
<svg style="left:0;top:0" width="1560" height="932">
<line x1="240" y1="662" x2="240" y2="912" stroke="#a0a0a0" stroke-width="1" opacity="0.85"/>
<path d="M233.5 660.4 H246.5 L240 667.2 Z" fill="#8a8a8a"/>
</svg>
</div><div id="frame"></div></body></html>
